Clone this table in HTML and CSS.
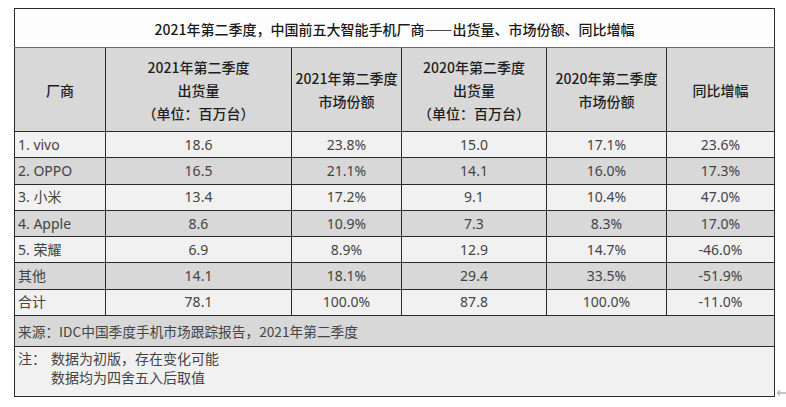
FILE: index.html
```html
<!DOCTYPE html>
<html lang="zh-CN">
<head>
<meta charset="utf-8">
<title>2021年第二季度 中国前五大智能手机厂商</title>
<link rel="stylesheet" href="styles.css">
</head>
<body>
<div class="wrap">
  <table class="report">
    <colgroup>
      <col class="c1"><col class="c2"><col class="c3"><col class="c4"><col class="c5"><col class="c6">
    </colgroup>
    <tr class="title-row"><td colspan="6">2021年第二季度，中国前五大智能手机厂商——出货量、市场份额、同比增幅</td></tr>
    <tr class="head-row">
      <th>厂商</th>
      <th>2021年第二季度<br>出货量<br>（单位：百万台）</th>
      <th>2021年第二季度<br>市场份额</th>
      <th>2020年第二季度<br>出货量<br>（单位：百万台）</th>
      <th>2020年第二季度<br>市场份额</th>
      <th>同比增幅</th>
    </tr>
    <tr class="row light"><td class="name">1. vivo</td><td>18.6</td><td>23.8%</td><td>15.0</td><td>17.1%</td><td>23.6%</td></tr>
    <tr class="row grey"><td class="name">2. OPPO</td><td>16.5</td><td>21.1%</td><td>14.1</td><td>16.0%</td><td>17.3%</td></tr>
    <tr class="row light"><td class="name">3. 小米</td><td>13.4</td><td>17.2%</td><td>9.1</td><td>10.4%</td><td>47.0%</td></tr>
    <tr class="row grey"><td class="name">4. Apple</td><td>8.6</td><td>10.9%</td><td>7.3</td><td>8.3%</td><td>17.0%</td></tr>
    <tr class="row light"><td class="name">5. 荣耀</td><td>6.9</td><td>8.9%</td><td>12.9</td><td>14.7%</td><td>-46.0%</td></tr>
    <tr class="row grey"><td class="name">其他</td><td>14.1</td><td>18.1%</td><td>29.4</td><td>33.5%</td><td>-51.9%</td></tr>
    <tr class="row light"><td class="name">合计</td><td>78.1</td><td>100.0%</td><td>87.8</td><td>100.0%</td><td>-11.0%</td></tr>
    <tr class="source-row"><td colspan="6">来源：IDC中国季度手机市场跟踪报告，2021年第二季度</td></tr>
    <tr class="note-row"><td colspan="6">
      <div class="note"><span class="note-label">注：</span><div class="note-lines"><div>数据为初版，存在变化可能</div><div>数据均为四舍五入后取值</div></div></div>
    </td></tr>
  </table>
  <span class="para-mark"><svg width="11" height="9" viewBox="0 0 11 9"><path d="M10.5 0 V6 H1.5 M4.2 3.3 L1.3 6 L4.2 8.7" fill="none" stroke="#8c8c8c" stroke-width="1"/></svg></span>
</div>
</body>
</html>
```
FILE: styles.css
```css
html, body {
  margin: 0;
  padding: 0;
  background: #ffffff;
}
body {
  font-family: "Noto Sans CJK SC", "Noto Sans", sans-serif;
  font-size: 14px;
  color: #444444;
}
.wrap {
  display: flex;
  align-items: flex-end;
  padding: 8px 0 0 14px;
}
.report {
  border-collapse: collapse;
  table-layout: fixed;
  width: 760px;
  border: 1px solid #1e1e1e;
}
.c1 { width: 91px; }
.c2 { width: 186px; }
.c3 { width: 110px; }
.c4 { width: 145px; }
.c5 { width: 120px; }
.c6 { width: 108px; }
.report td, .report th {
  border: 1px solid #2a2a2a;
  padding: 0;
  text-align: center;
  vertical-align: middle;
}
.title-row td {
  height: 37px;
  background: #fdfdfd;
  color: #1a1a1a;
  font-weight: 500;
  padding-top: 1px;
  border-bottom-color: #6a6a6a;
}
.head-row th {
  height: 82px;
  background: #d8d8d8;
  color: #1e1e1e;
  font-weight: 500;
  line-height: 23px;
  padding-top: 1px;
}
.row td {
  height: 25.3px;
  line-height: 18px;
  font-family: "Noto Sans", "Noto Sans CJK SC", sans-serif;
}
.row td.name {
  text-align: left;
  padding-left: 3px;
}
.light td { background: #f1f1f1; }
.grey td { background: #d8d8d8; }
.source-row td {
  height: 30px;
  background: #d8d8d8;
  text-align: left;
  padding-left: 3px;
  font-size: 13.7px;
}
.note-row td {
  height: 49px;
  background: #f1f1f1;
  text-align: left;
  padding-left: 3px;
  vertical-align: top;
}
.note {
  display: flex;
  padding-top: 2px;
  line-height: 19px;
}
.note-label {
  width: 33px;
  flex: none;
}
.para-mark {
  display: block;
  margin: 0 0 1px 1px;
  line-height: 0;
}
```
